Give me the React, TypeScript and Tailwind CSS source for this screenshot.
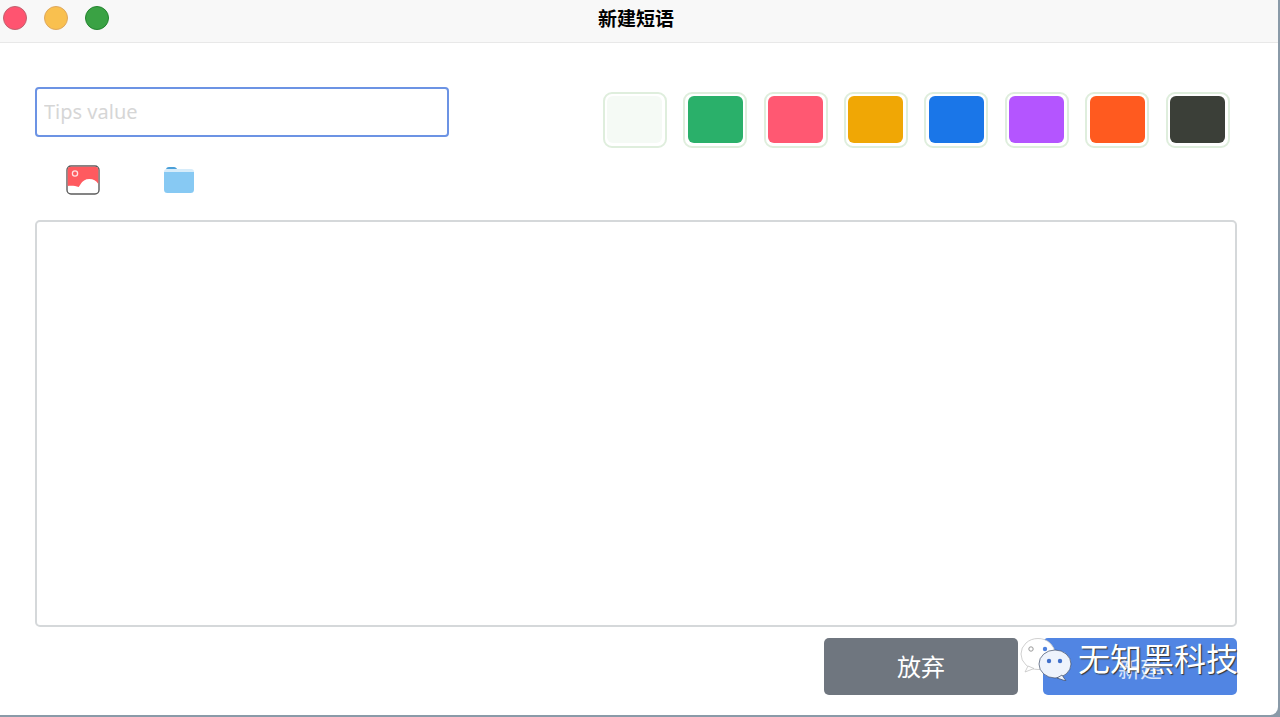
const swatches = ["#f5faf5", "#2ab06a", "#ff5872", "#f0a705", "#1a76e8", "#b455ff", "#ff5a1f", "#3b3f38"];

const font = "font-['Noto_Sans','Noto_Sans_CJK_SC',sans-serif]";

function PictureIcon() {
  return (
    <svg width="34" height="30" viewBox="0 0 34 30">
      <rect x="1" y="1" width="32" height="28" rx="4" fill="#fff" stroke="#5c5c5c" strokeWidth="1.4" />
      <path d="M1.7 5a3.3 3.3 0 0 1 3.3-3.3h24a3.3 3.3 0 0 1 3.3 3.3v14c-2-3.500-5-5-9-5s-7 2-8.600 5l-2 3c-3-1-7-1.500-11-1z" fill="#ff5a5f" />
      <circle cx="9" cy="8.500" r="2.600" fill="none" stroke="#ffe0e0" strokeWidth="1.300" />
    </svg>
  );
}

function FolderIcon() {
  return (
    <svg width="32" height="28" viewBox="0 0 32 28">
      <path d="M3 4a3 3 0 0 1 3-3h5c1.500 0 2.500 1 3.500 2.500H3z" fill="#4a9fd8" />
      <path d="M1 6a3 3 0 0 1 3-3h24a3 3 0 0 1 3 3v2H1z" fill="#d6ecfa" />
      <path d="M1 6h30v17.500a3.500 3.500 0 0 1-3.500 3.500h-23A3.500 3.500 0 0 1 1 23.500z" fill="#87c9f3" />
    </svg>
  );
}

function WechatIcon() {
  return (
    <svg width="54" height="44" viewBox="0 0 54 44">
      <ellipse cx="19" cy="17" rx="17" ry="15.500" fill="#fff" stroke="#c4c4c4" strokeWidth="0.800" />
      <path d="M9 29l-3 6 9-3.500z" fill="#fff" stroke="#c4c4c4" strokeWidth="0.800" />
      <circle cx="12" cy="12" r="2.200" fill="#fff" stroke="#999" strokeWidth="1" />
      <circle cx="26" cy="12" r="2.200" fill="#4f82df" />
      <ellipse cx="36" cy="27" rx="16" ry="14" fill="#eef3fc" stroke="#3c4a66" strokeWidth="0.700" />
      <path d="M43 38l4 6-9-3z" fill="#eef3fc" stroke="#3c4a66" strokeWidth="0.700" />
      <circle cx="30" cy="24" r="2.200" fill="#3f6fca" />
      <circle cx="41" cy="24" r="2.200" fill="#3f6fca" />
    </svg>
  );
}

export default function App() {
  return (
    <div className={`relative h-[717px] w-[1280px] overflow-hidden bg-[#8a9aa8] ${font}`}>
      <div className="flex h-[715px] w-[1278px] flex-col rounded-br-lg bg-white">
        {/* Title bar */}
        <div className="relative flex h-[43px] shrink-0 items-center justify-center border-b border-[#e8e8e8] bg-[#f8f8f8] pr-[6px]">
          <div className="absolute left-[3px] top-[6px] flex gap-[17px]">
            <span className="h-6 w-6 rounded-full border border-[#c0626f] bg-[#ff5470]" />
            <span className="h-6 w-6 rounded-full border border-[#dea85f] bg-[#f9c04f]" />
            <span className="h-6 w-6 rounded-full border border-[#23842f] bg-[#3aa244]" />
          </div>
          <span className="mb-[3px] text-[19px] font-bold text-black">新建短语</span>
        </div>

        <div className="flex flex-1 flex-col pl-[35px] pr-[41px] pt-[44px]">
          <div className="flex items-start justify-between">
            <input
              placeholder="Tips value"
              className="h-[50px] w-[414px] rounded-[4px] border-2 border-[#6c93e4] px-[7px] pb-[2px] text-[20px] outline-none placeholder:text-[#d6d6d6]"
            />
            <div className="mr-[7.500px] mt-[5px] flex gap-[16.400px]">
              {swatches.map((color) => (
                <div
                  key={color}
                  className="flex h-[56px] w-[64px] items-start justify-center rounded-[9px] border-2 border-[#dfeedd] pt-[2px]"
                >
                  <div className="h-[47px] w-[55px] rounded-[6px]" style={{ backgroundColor: color }} />
                </div>
              ))}
            </div>
          </div>

          <div className="mt-[17px] flex h-[30px] items-center gap-[63px] pl-[31px]">
            <PictureIcon />
            <FolderIcon />
          </div>

          <textarea className="mt-[25px] h-[407px] w-full resize-none rounded-[5px] border-2 border-[#d5d8da] outline-none" />

          <div className="mt-[11px] flex justify-end gap-[25px]">
            <button className="h-[57px] w-[194px] rounded-[5px] bg-[#6f767f] pt-px text-[24px] text-white">放弃</button>
            <button className="h-[57px] w-[194px] rounded-[5px] bg-[#5185e3] pt-1 text-[22px] text-[#d8e3f9]">新建</button>
          </div>
        </div>
      </div>

      {/* Watermark */}
      <div className="absolute left-[1019px] top-[637px] flex items-start">
        <WechatIcon />
        <span className="ml-[5px] mt-[-1px] text-[32px] leading-[46px] text-white [text-shadow:1px_1px_1px_#333]">无知黑科技</span>
      </div>
    </div>
  );
}
